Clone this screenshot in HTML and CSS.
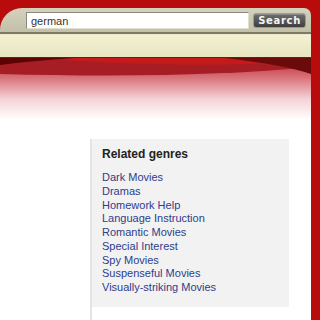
FILE: index.html
```html
<!DOCTYPE html>
<html lang="en">
<head>
  <meta charset="UTF-8" />
  <title>Related genres</title>
  <link rel="stylesheet" href="styles.css">
</head>
<body>
  <div class="page">
    <div class="main">
      <!-- Barra de busca -->
      <div class="top">
        <div class="searchbar">
          <input class="search-input" type="text" value="german">
          <button class="search-btn">Search</button>
        </div>
      </div>
      <div class="cream"></div>
      <svg class="swoosh" width="311" height="70" viewBox="0 0 311 70">
        <defs>
          <linearGradient id="fade" x1="0" y1="0" x2="0" y2="1">
            <stop offset="0" stop-color="#b8242c"/>
            <stop offset="0.3" stop-color="#d9747b"/>
            <stop offset="0.6" stop-color="#f4d3d6"/>
            <stop offset="0.9" stop-color="#ffffff"/>
          </linearGradient>
        </defs>
        <rect x="0" y="0" width="311" height="70" fill="url(#fade)"/>
        <rect x="0" y="0" width="311" height="1" fill="#7c1410"/>
        <path d="M0 1 L311 1 L311 10 Q190 22 0 17 Z" fill="#a61e24"/>
        <path d="M40 1 Q160 12 311 5 L311 1 Z" fill="#c41a1c"/>
        <path d="M0 1 L75 1 Q30 4 0 8 Z" fill="#5c0404"/>
        <path d="M225 1 L311 1 L311 17 Q285 8 225 1 Z" fill="#6a0a0a"/>
      </svg>

      <!-- Conteudo -->
      <div class="content">
        <div class="side">
          <div class="genres">
            <h3>Related genres</h3>
            <ul>
              <li><a href="#">Dark Movies</a></li>
              <li><a href="#">Dramas</a></li>
              <li><a href="#">Homework Help</a></li>
              <li><a href="#">Language Instruction</a></li>
              <li><a href="#">Romantic Movies</a></li>
              <li><a href="#">Special Interest</a></li>
              <li><a href="#">Spy Movies</a></li>
              <li><a href="#">Suspenseful Movies</a></li>
              <li><a href="#">Visually-striking Movies</a></li>
            </ul>
          </div>
        </div>
      </div>
    </div>
    <div class="rail"></div>
  </div>
</body>
</html>
```

FILE: styles.css
```css
* {
  box-sizing: border-box;
}

body {
  margin: 0;
  font-family: "Liberation Sans", Arial, sans-serif;
  background-color: #ffffff;
  overflow: hidden;
}

.page {
  display: flex;
  height: 320px;
}

.main {
  width: 311px;
  display: flex;
  flex-direction: column;
}

.rail {
  width: 9px;
  background-color: #b80b0c;
}

.top {
  background-color: #b80b0c;
  padding-top: 8px;
}

.searchbar {
  height: 26px;
  display: flex;
  align-items: flex-start;
  padding: 4px 5px 0 26px;
  gap: 4px;
  background: linear-gradient(#d4d2bd, #c3c0a8);
  border-radius: 22px 7px 0 0;
  border-bottom: 2px solid #7d7a66;
}

.search-input {
  width: 224px;
  height: 17px;
  margin: 0;
  padding: 0 4px;
  font-family: "Liberation Sans", Arial, sans-serif;
  font-size: 11px;
  color: #333333;
  background-color: #ffffff;
  border: 1px solid #8c8a78;
  border-right-color: #e0dfd0;
  border-bottom-color: #e0dfd0;
}

.search-btn {
  width: 53px;
  height: 15px;
  margin-top: 1px;
  padding: 0;
  font-family: "DejaVu Sans", Verdana, sans-serif;
  font-size: 10px;
  font-weight: bold;
  letter-spacing: 0.7px;
  color: #f4f4f4;
  background: linear-gradient(#6e6e6e, #3e3e3e);
  border: 1px solid #9a9a90;
  border-radius: 3px;
  box-shadow: inset 0 1px 0 #8a8a8a;
}

.cream {
  height: 23px;
  background: linear-gradient(#f4f1d3, #e8e5c2);
  border-top: 1px solid #ece9cc;
}

.swoosh {
  display: block;
}

.content {
  display: flex;
  justify-content: flex-end;
  padding-right: 22px;
  margin-top: 12px;
  flex: 1;
}

.side {
  width: 199px;
  border-left: 2px solid #e4e4e4;
}

.genres {
  background-color: #f2f2f2;
  padding: 8px 10px 12px 10px;
}

.genres h3 {
  margin: 0 0 10px 0;
  font-size: 12px;
  font-weight: bold;
  color: #222222;
  line-height: 14px;
}

.genres ul {
  list-style: none;
  margin: 0;
  padding: 0;
}

.genres li {
  font-size: 11px;
  line-height: 13.75px;
}

.genres a {
  color: #2e3d8c;
  text-decoration: none;
}
```
